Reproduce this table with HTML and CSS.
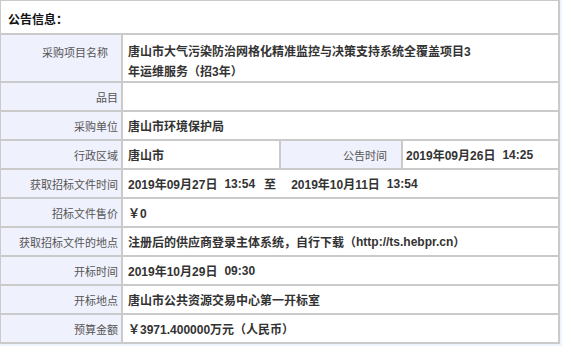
FILE: index.html
```html
<!DOCTYPE html>
<html lang="zh-CN">
<head>
<meta charset="utf-8">
<title>公告信息</title>
<link rel="stylesheet" href="styles.css">
</head>
<body>
<div class="info">
  <div class="head">公告信息：</div>

  <div class="lab top wide">采购项目名称</div>
  <div class="val top span3">唐山市大气污染防治网格化精准监控与决策支持系统全覆盖项目3<br>年运维服务（招3年）</div>

  <div class="lab">品目</div>
  <div class="val span3"></div>

  <div class="lab">采购单位</div>
  <div class="val span3">唐山市环境保护局</div>

  <div class="lab">行政区域</div>
  <div class="val">唐山市</div>
  <div class="lab wide2">公告时间</div>
  <div class="val narrow">2019年09月26日<span class="sp"></span>14:25</div>

  <div class="lab">获取招标文件时间</div>
  <div class="val span3">2019年09月27日<span class="sp"></span>13:54<span class="to">至</span>2019年10月11日<span class="sp"></span>13:54</div>

  <div class="lab">招标文件售价</div>
  <div class="val span3">￥0</div>

  <div class="lab">获取招标文件的地点</div>
  <div class="val span3">注册后的供应商登录主体系统，自行下载（<span class="url">http://ts.hebpr.cn</span>）</div>

  <div class="lab">开标时间</div>
  <div class="val span3">2019年10月29日<span class="sp"></span>09:30</div>

  <div class="lab">开标地点</div>
  <div class="val span3">唐山市公共资源交易中心第一开标室</div>

  <div class="lab">预算金额</div>
  <div class="val span3">￥3971.400000万元（人民币）</div>
</div>
</body>
</html>
```

FILE: styles.css
```css
html, body {
  margin: 0;
  padding: 0;
}
body {
  background: #eef4fb;
  font-family: "Noto Sans CJK SC", "Noto Sans", sans-serif;
}
.info {
  display: grid;
  grid-template-columns: 122px 158px 122px 157px;
  grid-template-rows: 34px 48px repeat(9, 29px);
  width: max-content;
  margin: -1px 0 0 -1px;
  border: 1px solid #cacaca;
  background: #fff;
}
.info > div {
  box-sizing: border-box;
  border: 1px solid #cacaca;
  display: flex;
  align-items: center;
  white-space: nowrap;
  overflow: hidden;
}
.head {
  grid-column: 1 / -1;
  font-size: 12px;
  font-weight: bold;
  color: #111;
  padding: 3px 0 0 7px;
}
.lab {
  background: #eff1fc;
  color: #555;
  font-size: 11px;
  justify-content: flex-end;
  padding-right: 3px;
}
.lab.wide {
  padding-right: 13px;
}
.lab.wide2 {
  padding-right: 14px;
}
.val {
  font-family: "Liberation Sans", "Noto Sans CJK SC", sans-serif;
  font-size: 12px;
  font-weight: bold;
  color: #333;
  padding-left: 5px;
}
.val.narrow {
  padding-left: 3px;
}
.span3 {
  grid-column: span 3;
}
.info > .top {
  align-items: flex-start;
  padding-top: 7px;
  line-height: 20px;
}
.val.top {
  display: block;
}
.sp {
  display: inline-block;
  width: 7px;
}
.to {
  margin: 0 15px 0 9px;
}
```
